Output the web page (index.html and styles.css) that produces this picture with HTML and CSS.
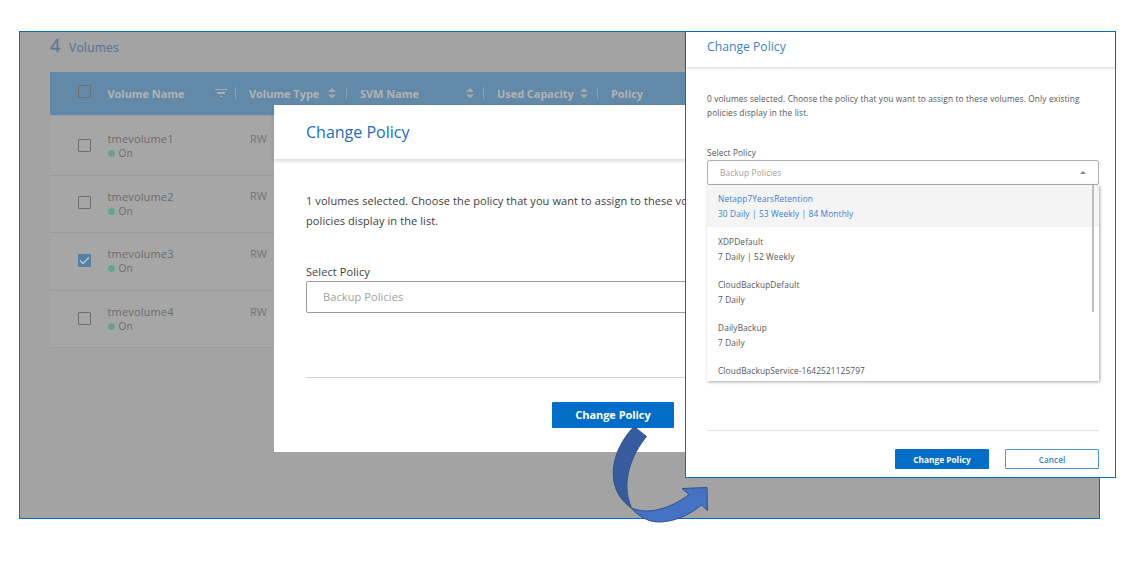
FILE: index.html
```html
<!DOCTYPE html>
<html>
	<head>
		<meta charset="utf-8">
		<title>Change Policy</title>
		<link rel="stylesheet" href="styles.css">
	</head>
	<body>
		<div id="outer">
			<div class="count"><b>4</b><span>Volumes</span></div>
			<div class="table">
				<div class="row head">
					<i class="check"></i>
					<div class="th name">
						<span>Volume Name</span>
						<svg class="filter" width="12" height="8" viewBox="0 0 12 8"><path d="M0 .5h12M2 3.500h8M2.500 4.500h7M5 7.500h2"/></svg>
					</div>
					<div class="th type">
						<span>Volume Type</span>
						<svg class="sort" width="8" height="10" viewBox="0 0 8 10"><path d="M0 4l4-4 4 4zM0 6.500h8l-4 4z"/></svg>
					</div>
					<div class="th svm">
						<span>SVM Name</span>
						<svg class="sort" width="8" height="10" viewBox="0 0 8 10"><path d="M0 4l4-4 4 4zM0 6.500h8l-4 4z"/></svg>
					</div>
					<div class="th used">
						<span>Used Capacity</span>
						<svg class="sort" width="8" height="10" viewBox="0 0 8 10"><path d="M0 4l4-4 4 4zM0 6.500h8l-4 4z"/></svg>
					</div>
					<div class="th last"><span>Policy</span></div>
				</div>
				<div class="row">
					<i class="check"></i>
					<div class="vol"><p>tmevolume1</p><p class="state">On</p></div>
					<span class="rw">RW</span>
				</div>
				<div class="row">
					<i class="check"></i>
					<div class="vol"><p>tmevolume2</p><p class="state">On</p></div>
					<span class="rw">RW</span>
				</div>
				<div class="row">
					<i class="check checked"><svg width="13" height="13" viewBox="0 0 13 13"><path d="M2 6.500l3 3 6-6"/></svg></i>
					<div class="vol"><p>tmevolume3</p><p class="state">On</p></div>
					<span class="rw">RW</span>
				</div>
				<div class="row">
					<i class="check"></i>
					<div class="vol"><p>tmevolume4</p><p class="state">On</p></div>
					<span class="rw">RW</span>
				</div>
			</div>

			<div class="modal">
				<h2>Change Policy</h2>
				<div class="content">
					<p class="text">1 volumes selected. Choose the policy that you want to assign to these vo<br>policies display in the list.</p>
					<label>Select Policy</label>
					<div class="select">Backup Policies</div>
					<div class="buttons"><a class="btn" href="javascript:;">Change Policy</a></div>
				</div>
			</div>

			<div class="modal small">
				<h2>Change Policy</h2>
				<div class="content">
					<p class="text">0 volumes selected. Choose the policy that you want to assign to these volumes. Only existing<br>policies display in the list.</p>
					<label>Select Policy</label>
					<div class="select">
						<span>Backup Policies</span>
						<svg width="6" height="3" viewBox="0 0 6 3"><path d="M0 3l3-3 3 3z"/></svg>
						<ul class="list">
							<li class="active">Netapp7YearsRetention<br><span>30 Daily | 53 Weekly | 84 Monthly</span></li>
							<li>XDPDefault<br><span>7 Daily | 52 Weekly</span></li>
							<li>CloudBackupDefault<br><span>7 Daily</span></li>
							<li>DailyBackup<br><span>7 Daily</span></li>
							<li>CloudBackupService-1642521125797</li>
						</ul>
					</div>
					<div class="buttons">
						<a class="btn" href="javascript:;">Change Policy</a>
						<a class="btn cancel" href="javascript:;">Cancel</a>
					</div>
				</div>
			</div>

			<svg class="arrow" width="100" height="104" viewBox="610 424 100 104">
				<path class="tail" d="M634 426.500L646.500 436.500C632 454 620 482 631.500 508C617 498 612 484 613.500 468C615 452 624 437 634 426.500z"/>
				<path class="tip" d="M631.500 508C648 515 670 509 689 494.500L682 488.500L707 487.500L707.500 510.500L701.500 505C688 516 673 522 659 522C648 522 638 516 631.500 508z"/>
			</svg>
		</div>
	</body>
</html>
```

FILE: styles.css
```css
*{margin: 0;padding: 0;box-sizing: border-box;}
body{height: 570px;padding: 31px 0 0 19px;background-color: #fff;font-family: "Open Sans", sans-serif;font-size: 11px;color: #404040;}
a{text-decoration: none;}
#outer{width: 1081px;height: 488px;padding: 0 30px;position: relative;
	background-color: #a3a3a3;border: 1px solid #0070c0;}

/* volumes table */
.count{height: 40px;padding-top: 1px;display: flex;align-items: baseline;color: #5a7899;}
.count b{font-size: 18px;font-weight: 400;line-height: 25px;width: 19px;-webkit-text-stroke: 0.3px #5a7899;}
.count span{font-size: 12px;letter-spacing: 0.25px;-webkit-text-stroke: 0.2px #5a7899;}
.table{background-color: #a6a6a6;}
.row{height: 57.6px;display: flex;align-items: center;padding-left: 28px;border-bottom: 1px solid #9c9c9c;}
.row.head{height: 43px;background-color: #628aa8;border: 0;margin-bottom: 3px;box-shadow: 0 1px 0 #9b9fa2;}
.check{width: 13px;height: 13px;margin-right: 16.5px;border: 1px solid #6e6e6e;border-radius: 1px;flex: none;}
.row > .check{position: relative;top: -1px;}
.row.head > .check{top: -2px;}
.check.checked{background-color: #557fa5;border: 0;}
.check svg{display: block;fill: none;stroke: #c0c8cf;stroke-width: 1.4;}
.th{height: 12px;display: flex;align-items: center;justify-content: space-between;flex: none;position: relative;top: -1px;
	color: #b2b2b2;font-weight: 700;letter-spacing: -0.05px;margin-right: 13px;padding-right: 10px;border-right: 1px solid #86a0b3;}
.th span{position: relative;top: 1px;white-space: nowrap;}
.th.name{width: 128.5px;padding-right: 8px;}
.th.type{width: 98px;}
.th.svm{width: 124px;padding-right: 9px;}
.th.used{width: 101px;padding-right: 9px;}
.th.last{border: 0;}
.filter{stroke: #a8b0b5;fill: none;}
.sort{fill: #a3a9ad;}
.vol{width: 142.5px;line-height: 15px;font-size: 11px;color: #6c6c6c;letter-spacing: 0.15px;}
.vol .state{font-size: 10px;display: flex;align-items: center;}
.state:before{content: "";width: 7px;height: 7px;margin-right: 4px;border-radius: 50%;background-color: #6b9f92;}
.rw{color: #747474;position: relative;top: -8px;}

/* dialogs */
.modal{width: 571px;height: 347px;background-color: #fff;position: absolute;left: 254px;top: 73px;}
.modal h2{height: 54px;padding-left: 32px;font-size: 16px;line-height: 54px;font-weight: 400;color: #1a6cc4;
	box-shadow: 0 2px 4px rgba(0,0,0,0.16);}
.content{padding: 32px 32px 0;}
.text{font-size: 11px;line-height: 20px;letter-spacing: 0.09px;white-space: nowrap;}
.content label{display: block;margin-top: 33px;line-height: 16px;letter-spacing: 0.08px;}
.select{height: 32px;margin-top: 1px;padding: 0 16px;border: 1px solid #9b9b9b;border-radius: 2px;
	line-height: 30px;letter-spacing: 0.1px;color: #a0a0a0;position: relative;}
.buttons{margin-top: 64px;padding-top: 24px;border-top: 1px solid #d2d2d2;}
.btn{display: block;width: 122px;height: 26px;margin-left: 246px;border-radius: 1px;background-color: #006dc9;
	color: #fff;font-size: 11px;line-height: 26px;font-weight: 700;letter-spacing: -0.05px;text-align: center;}

.small{width: 431px;height: 447px;left: 665px;top: -1px;border: 1px solid #0070c0;font-size: 8.3px;color: #555;}
.small h2{height: 35px;padding-left: 21px;font-size: 12.2px;line-height: 29px;color: #3a7fd0;
	box-shadow: 0 1px 3px rgba(0,0,0,0.2);}
.small .content{padding: 25px 16px 0 21px;}
.small .text{font-size: 8.3px;line-height: 14px;letter-spacing: 0.13px;}
.small label{margin-top: 26px;line-height: 13px;letter-spacing: 0.12px;}
.small .select{height: 25px;margin-top: 1px;padding: 0 12px;line-height: 23px;letter-spacing: 0.13px;border-color: #b0b0b0;
	display: flex;align-items: center;justify-content: space-between;}
.small .select svg{fill: #888;}
.list{position: absolute;left: -1px;right: -1px;top: 24px;height: 196px;overflow: hidden;list-style: none;
	background-color: #fff;box-shadow: 1px 1px 3px rgba(0,0,0,0.35);color: #555;}
.list:after{content: "";position: absolute;right: 5px;top: 0;width: 2px;height: 127px;background-color: #bdbdbd;}
.list li{height: 43px;padding: 7px 11px 0;line-height: 14.5px;}
.list .active{height: 42px;background-color: #f4f4f4;color: #3a7fd0;}
.list .active + li{padding-top: 8px;height: 44px;}
.small .buttons{display: flex;justify-content: flex-end;margin-top: 245px;padding-top: 18px;border-color: #e2e2e2;}
.small .btn{width: 94px;height: 20px;margin-left: 16px;font-size: 8.3px;line-height: 21px;letter-spacing: 0;}
.small .cancel{background-color: #fff;border: 1px solid #4a93d6;color: #3a7fc4;line-height: 19px;font-weight: 600;}

.arrow{position: absolute;left: 590px;top: 392px;stroke: #2f528f;stroke-width: 1;stroke-linejoin: round;}
.tail{fill: #365c9f;}
.tip{fill: #4472c4;}
```
